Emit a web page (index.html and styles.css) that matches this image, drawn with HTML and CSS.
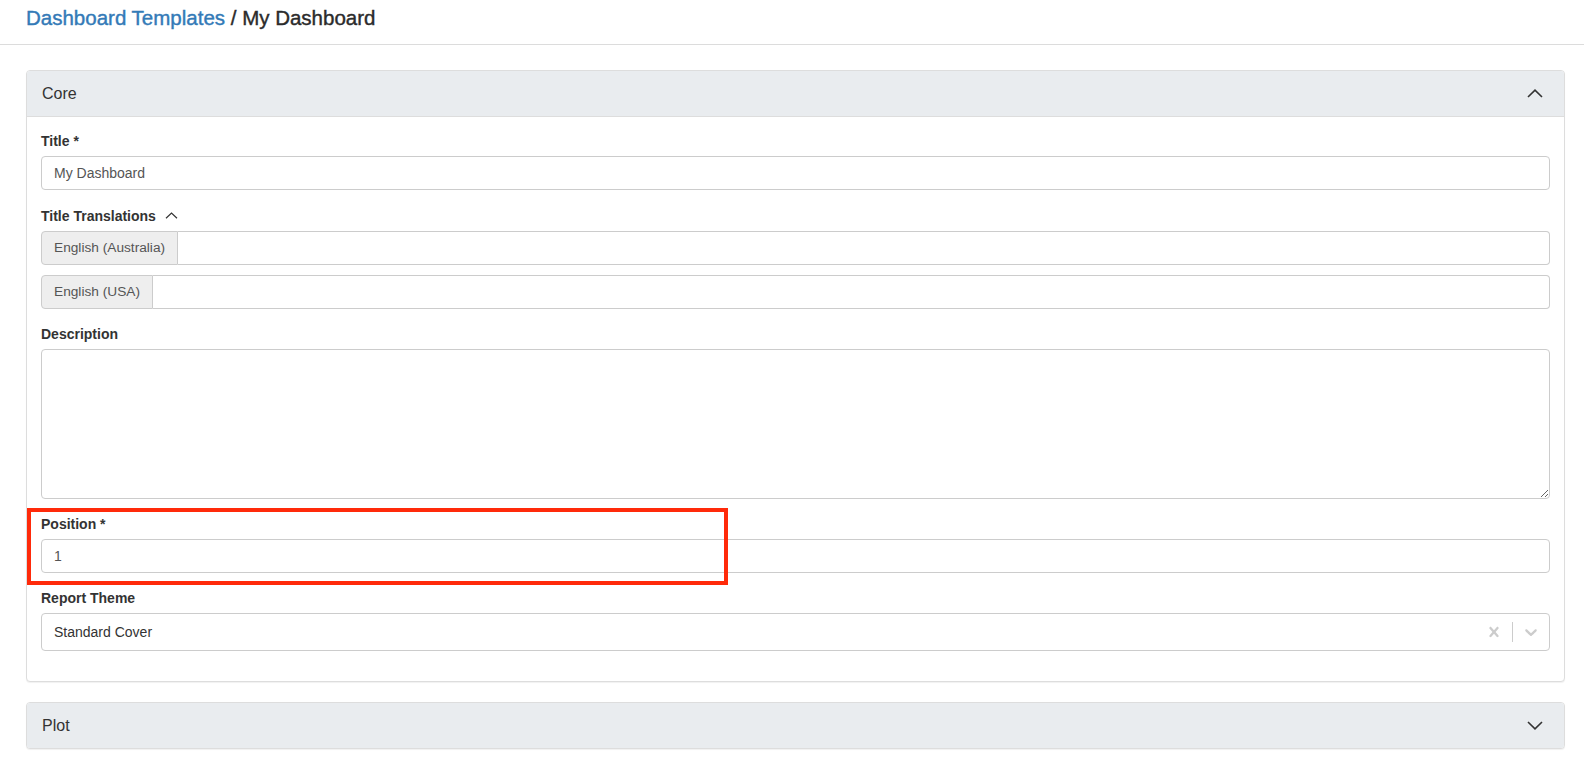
FILE: index.html
```html
<!DOCTYPE html>
<html lang="en">
<head>
<meta charset="utf-8">
<title>My Dashboard</title>
<link rel="stylesheet" href="styles.css">
</head>
<body>
<header class="topbar">
  <h1 class="crumbs"><a class="crumb-link" href="#">Dashboard Templates</a> / My Dashboard</h1>
</header>
<main class="page">
  <section class="panel">
    <div class="panel-heading">
      <span class="panel-title">Core</span>
      <svg class="chev-lg" width="16" height="9" viewBox="0 0 16 9"><polyline points="1,8 8,1.2 15,8" fill="none" stroke="#333" stroke-width="1.6"/></svg>
    </div>
    <div class="panel-body">
      <div class="form-group">
        <label class="label">Title *</label>
        <input class="form-control" type="text" value="My Dashboard">
      </div>
      <div class="form-group">
        <div class="label label-row">Title Translations
          <svg class="chev-sm" width="13" height="7" viewBox="0 0 13 7"><polyline points="1,6.2 6.5,1 12,6.2" fill="none" stroke="#333" stroke-width="1.2"/></svg>
        </div>
        <div class="input-group">
          <span class="addon">English (Australia)</span>
          <input class="form-control grouped" type="text" value="">
        </div>
        <div class="input-group">
          <span class="addon">English (USA)</span>
          <input class="form-control grouped" type="text" value="">
        </div>
      </div>
      <div class="form-group">
        <label class="label">Description</label>
        <textarea class="form-control textarea"></textarea>
      </div>
      <div class="form-group highlight-host">
        <label class="label">Position *</label>
        <input class="form-control" type="text" value="1">
        <div class="highlight"></div>
      </div>
      <div class="form-group">
        <label class="label">Report Theme</label>
        <div class="select">
          <div class="select-value">Standard Cover</div>
          <div class="indicator">
            <svg width="20" height="20" viewBox="0 0 20 20"><path fill="#cccccc" d="M14.348 14.849c-0.469 0.469-1.229 0.469-1.697 0l-2.651-3.030-2.651 3.029c-0.469 0.469-1.229 0.469-1.697 0-0.469-0.469-0.469-1.229 0-1.697l2.758-3.15-2.759-3.152c-0.469-0.469-0.469-1.228 0-1.697s1.228-0.469 1.697 0l2.652 3.031 2.651-3.031c0.469-0.469 1.228-0.469 1.697 0s0.469 1.229 0 1.697l-2.758 3.152 2.758 3.15c0.469 0.469 0.469 1.229 0 1.698z"/></svg>
          </div>
          <span class="separator"></span>
          <div class="indicator">
            <svg width="20" height="20" viewBox="0 0 20 20"><path fill="#cccccc" d="M4.516 7.548c0.436-0.446 1.043-0.481 1.576 0l3.908 3.747 3.908-3.747c0.533-0.481 1.141-0.446 1.574 0 0.436 0.445 0.408 1.197 0 1.615-0.406 0.418-4.695 4.502-4.695 4.502-0.217 0.223-0.502 0.335-0.787 0.335s-0.57-0.112-0.789-0.335c0 0-4.287-4.084-4.695-4.502s-0.436-1.17 0-1.615z"/></svg>
          </div>
        </div>
      </div>
    </div>
  </section>
  <section class="panel">
    <div class="panel-heading collapsed">
      <span class="panel-title">Plot</span>
      <svg class="chev-lg" width="16" height="9" viewBox="0 0 16 9"><polyline points="1,1 8,7.8 15,1" fill="none" stroke="#333" stroke-width="1.6"/></svg>
    </div>
  </section>
</main>
</body>
</html>
```
FILE: styles.css
```css
* { box-sizing: border-box; }
html, body { margin: 0; padding: 0; background: #fff; }
body {
  font-family: "Liberation Sans", Arial, Helvetica, sans-serif;
  font-size: 14px;
  color: #333;
  line-height: 20px;
}
.topbar {
  height: 45px;
  border-bottom: 1px solid #dcdcdc;
  padding: 6px 26px 0;
}
.crumbs {
  margin: 0;
  font-size: 20.5px;
  line-height: 24px;
  font-weight: normal;
  color: #2b2b2b;
  -webkit-text-stroke: 0.4px #2b2b2b;
}
.crumb-link {
  color: #337ab7;
  text-decoration: none;
  -webkit-text-stroke: 0.4px #337ab7;
}
.page {
  padding: 25px 19px 0 26px;
}
.panel {
  border: 1px solid #dddddd;
  border-radius: 4px;
  margin-bottom: 20px;
  box-shadow: 0 1px 1px rgba(0,0,0,0.06);
  background: #fff;
}
.panel-heading {
  height: 46px;
  background: #e9ecef;
  border-bottom: 1px solid #dddddd;
  border-radius: 3px 3px 0 0;
  display: flex;
  align-items: center;
  justify-content: space-between;
  padding: 0 21px 0 15px;
}
.panel-heading.collapsed {
  border-bottom: 0;
  border-radius: 3px;
  height: 45px;
}
.panel-title {
  font-size: 16px;
  color: #333;
}
.chev-lg { display: block; }
.panel-body {
  padding: 14px 14px 15px 14px;
}
.form-group {
  margin-bottom: 15px;
}
.label {
  display: block;
  font-weight: bold;
  font-size: 14px;
  line-height: 20px;
  margin-bottom: 5px;
  color: #333;
}
.label-row {
  display: flex;
  align-items: center;
  gap: 9px;
  line-height: 22px;
  margin-bottom: 4px;
}
.chev-sm { display: block; margin-top: -2px; }
.form-control {
  display: block;
  width: 100%;
  height: 34px;
  padding: 6px 12px;
  font-family: inherit;
  font-size: 14px;
  line-height: 20px;
  color: #555;
  background: #fff;
  border: 1px solid #cccccc;
  border-radius: 4px;
  outline: none;
}
.input-group {
  display: flex;
  margin-bottom: 10px;
}
.input-group:last-child { margin-bottom: 0; }
.addon {
  flex: none;
  height: 34px;
  padding: 6px 12px;
  font-size: 13.7px;
  line-height: 20px;
  color: #555;
  background: #eeeeee;
  border: 1px solid #cccccc;
  border-radius: 4px 0 0 4px;
  white-space: nowrap;
}
.form-control.grouped {
  flex: 1;
  border-left: 0;
  border-radius: 0 4px 4px 0;
}
.textarea {
  height: 150px;
  resize: vertical;
}
.highlight-host { position: relative; }
.highlight {
  position: absolute;
  left: -14px;
  top: -6px;
  width: 701px;
  height: 77px;
  border: 4px solid #ff2a0a;
  pointer-events: none;
}
.select {
  display: flex;
  align-items: center;
  height: 38px;
  border: 1px solid #cccccc;
  border-radius: 4px;
  background: #fff;
}
.select-value {
  flex: 1;
  padding: 0 12px;
  color: #333;
  font-size: 14px;
}
.indicator {
  display: flex;
  padding: 8px;
}
.indicator svg { display: block; }
.separator {
  width: 1px;
  align-self: stretch;
  margin: 8px 0;
  background: #cccccc;
}
```
